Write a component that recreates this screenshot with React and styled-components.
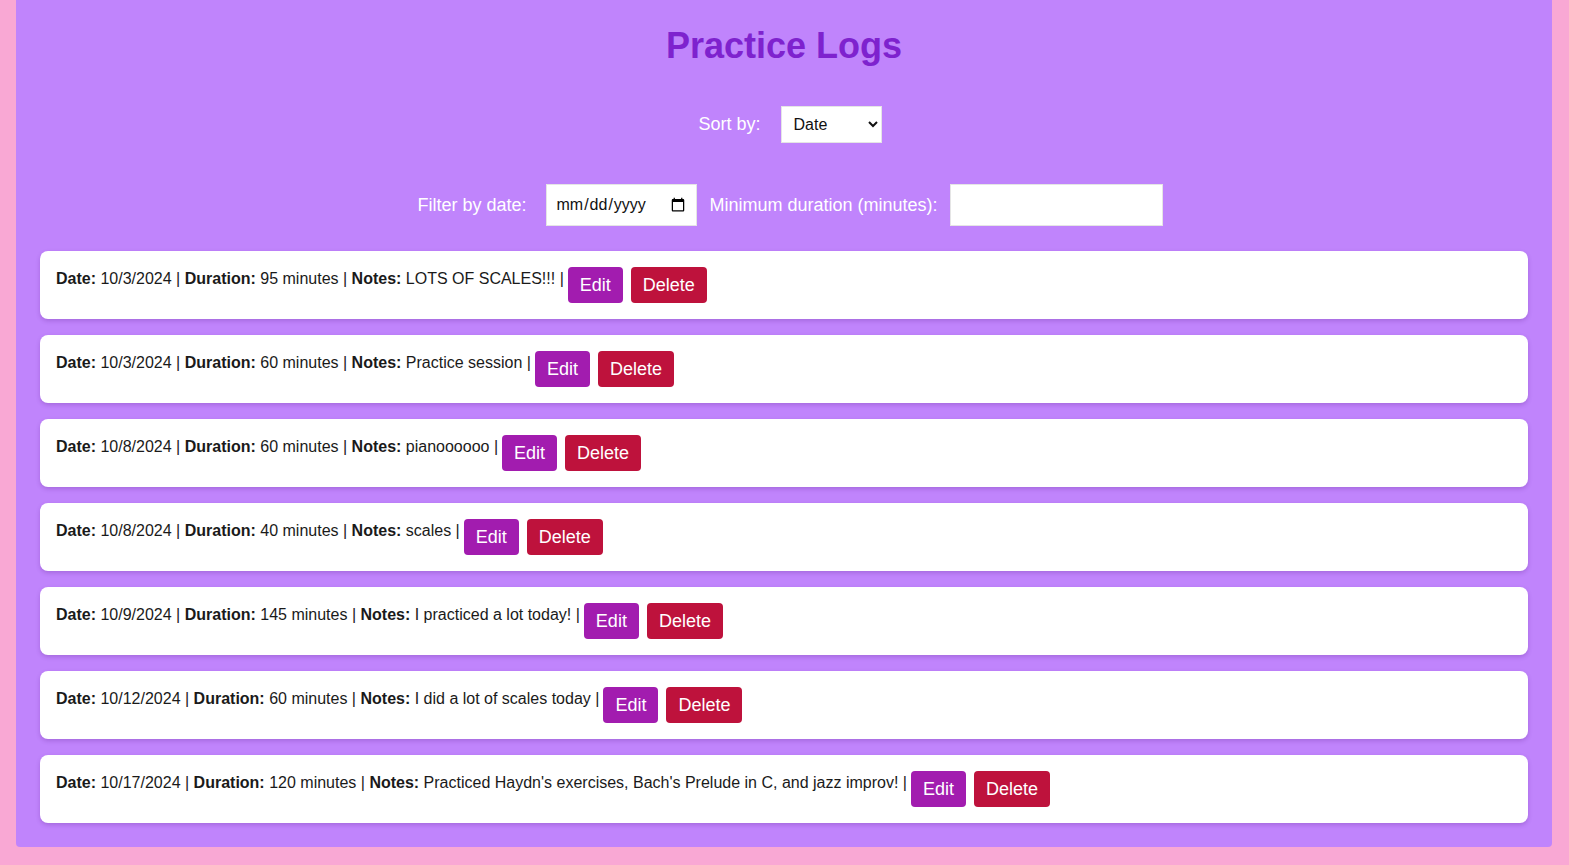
import React, { useState } from "react";
import styled, { createGlobalStyle } from "styled-components";

const GlobalStyle = createGlobalStyle`
  html, body {
    margin: 0;
    padding: 0;
    background-color: #f9a8d4;
  }
  body {
    padding: 0 17px 19px 16px;
    font-family: 'Liberation Sans', Arial, sans-serif;
  }
`;

const Page = styled.div`
  background-color: #c084fc;
  border-radius: 0 0 4px 4px;
  padding: 25px 24px 24px;
  min-height: 797px;
`;

const Title = styled.h1`
  margin: 0 0 39px;
  text-align: center;
  color: #7e22ce;
  font-size: 36px;
  font-weight: bold;
  line-height: 42px;
`;

const ControlRow = styled.div`
  display: flex;
  justify-content: center;
  align-items: center;
  gap: ${(p) => p.$gap || 12}px;
  padding-left: 12px;
  margin-bottom: ${(p) => p.$bottom || 0}px;
`;

const Label = styled.label`
  color: #fff;
  font-size: 18px;
`;

const Select = styled.select`
  width: 101px;
  height: 37px;
  padding: 0 8px;
  font-family: 'Liberation Sans', Arial, sans-serif;
  font-size: 16px;
  color: #111;
  background: #fff;
  border: 1px solid #e5e5e5;
  border-radius: 0;
`;

const Field = styled.input`
  box-sizing: border-box;
  width: ${(p) => p.$width}px;
  height: ${(p) => p.$height || 42}px;
  padding: 0 8px;
  font-family: 'Liberation Sans', Arial, sans-serif;
  font-size: 16px;
  color: #111;
  background: #fff;
  border: 1px solid #e5e5e5;
  border-radius: 0;
`;

const List = styled.div`
  display: flex;
  flex-direction: column;
  gap: 16px;
  margin-top: 25px;
`;

const Card = styled.div`
  display: flex;
  align-items: flex-start;
  background: #fff;
  border-radius: 8px;
  padding: 16px;
  box-shadow: 0 2px 4px rgba(88, 28, 135, 0.25);
`;

const Entry = styled.span`
  font-family: 'Liberation Sans', Arial, sans-serif;
  font-size: 16px;
  line-height: 24px;
  color: #1a1a1a;
  white-space: pre;
`;

const Button = styled.button`
  height: 36px;
  margin-left: ${(p) => p.$space}px;
  padding: 0 12px;
  border: none;
  border-radius: 4px;
  background-color: ${(p) => (p.$danger ? "#be123c" : "#a21caf")};
  color: #fff;
  font-family: 'Liberation Sans', Arial, sans-serif;
  font-size: 18px;
  cursor: pointer;
`;

const logs = [
  { date: "10/3/2024", duration: 95, notes: "LOTS OF SCALES!!!" },
  { date: "10/3/2024", duration: 60, notes: "Practice session" },
  { date: "10/8/2024", duration: 60, notes: "pianoooooo" },
  { date: "10/8/2024", duration: 40, notes: "scales" },
  { date: "10/9/2024", duration: 145, notes: "I practiced a lot today!" },
  { date: "10/12/2024", duration: 60, notes: "I did a lot of scales today" },
  {
    date: "10/17/2024",
    duration: 120,
    notes: "Practiced Haydn's exercises, Bach's Prelude in C, and jazz improv!",
  },
];

const App = () => {
  const [sort, setSort] = useState("date");

  return (
    <>
      <GlobalStyle />
      <Page>
        <Title>Practice Logs</Title>

        <ControlRow $gap={20} $bottom={41}>
          <Label htmlFor="sort">Sort by:</Label>
          <Select id="sort" value={sort} onChange={(e) => setSort(e.target.value)}>
            <option value="date">Date</option>
            <option value="duration">Duration</option>
          </Select>
        </ControlRow>

        <ControlRow $gap={12}>
          <Label htmlFor="filter-date" style={{ marginRight: 8 }}>Filter by date:</Label>
          <Field id="filter-date" type="date" $width={151} />
          <Label htmlFor="min-duration">Minimum duration (minutes):</Label>
          <Field id="min-duration" type="number" $width={213} />
        </ControlRow>

        <List>
          {logs.map((log, i) => (
            <Card key={i}>
              <Entry>
                <strong>Date:</strong> {log.date} | <strong>Duration:</strong>{" "}
                {log.duration} minutes | <strong>Notes:</strong> {log.notes} |
              </Entry>
              <Button $space={4}>Edit</Button>
              <Button $space={8} $danger>Delete</Button>
            </Card>
          ))}
        </List>
      </Page>
    </>
  );
};

export default App;
